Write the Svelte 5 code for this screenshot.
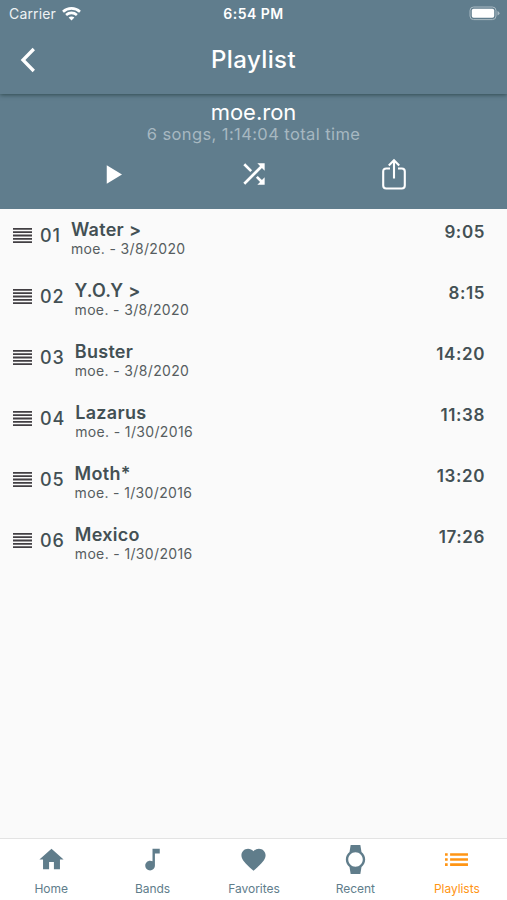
<script lang="ts">
	const songs = [
		{ title: 'Water >', date: '3/8/2020', length: '9:05' },
		{ title: 'Y.O.Y >', date: '3/8/2020', length: '8:15' },
		{ title: 'Buster', date: '3/8/2020', length: '14:20' },
		{ title: 'Lazarus', date: '1/30/2016', length: '11:38' },
		{ title: 'Moth*', date: '1/30/2016', length: '13:20' },
		{ title: 'Mexico', date: '1/30/2016', length: '17:26' }
	];

	const tabs = [
		{ name: 'Home', icon: 'M10 20v-6h4v6h5v-8h3L12 3 2 12h3v8z' },
		{
			name: 'Bands',
			icon: 'M12 3v10.55c-.59-.34-1.27-.55-2-.55-2.21 0-4 1.79-4 4s1.79 4 4 4 4-1.79 4-4V7h4V3z'
		},
		{
			name: 'Favorites',
			icon: 'M12 21.35l-1.45-1.32C5.4 15.36 2 12.28 2 8.5 2 5.42 4.42 3 7.5 3c1.74 0 3.41.81 4.5 2.09C13.09 3.81 14.76 3 16.5 3 19.58 3 22 5.42 22 8.5c0 3.78-3.4 6.86-8.55 11.54z'
		},
		{
			name: 'Recent',
			icon: 'M20 12c0-2.54-1.19-4.81-3.04-6.27L16 0H8l-.95 5.73C5.19 7.19 4 9.45 4 12s1.19 4.81 3.05 6.27L8 24h8l.96-5.73C18.81 16.81 20 14.54 20 12zM6 12c0-3.31 2.69-6 6-6s6 2.69 6 6-2.69 6-6 6-6-2.69-6-6z'
		},
		{
			name: 'Playlists',
			icon: 'M2.5 6.8h2.2v2.1H2.5zm0 4.2h2.2v2.1H2.5zm0 4.2h2.2v2.1H2.5zM6.7 6.8h14.8v2.1H6.7zm0 4.2h14.8v2.1H6.7zm0 4.2h14.8v2.1H6.7z'
		}
	];

	let active = $state('Playlists');
</script>

<div class="app">
	<header>
		<div class="status">
			<div class="carrier">
				<span>Carrier</span>
				<svg width="19" height="14" viewBox="0 0 19 14" fill="none" stroke="#fff" stroke-width="2.6">
					<path d="M1 4.7C5.8.3 13.2.3 18 4.7" />
					<path d="M4.1 8c3.1-2.8 7.7-2.8 10.800 0" />
					<path d="M9.500 13.500l-2.900-3c1.600-1.500 4.200-1.500 5.800 0z" fill="#fff" stroke="none" />
				</svg>
			</div>
			<div class="clock">6:54 PM</div>
			<div class="battery">
				<svg width="32" height="15" viewBox="0 0 32 15">
					<rect x="1" y="1" width="26" height="12.6" rx="3.6" fill="none" stroke="#a9bac3" />
					<rect x="2.8" y="2.8" width="22.4" height="9" rx="1.8" fill="#fff" />
					<path d="M28.5 5q2 .8 2 2.3t-2 2.3z" fill="#a9bac3" />
				</svg>
			</div>
		</div>
		<div class="bar">
			<button class="back" aria-label="Back">
				<svg width="16" height="26" viewBox="0 0 16 26" fill="none" stroke="#fff" stroke-width="3.3">
					<path d="M13.8 2L3 13l10.8 11" />
				</svg>
			</button>
			<h1>Playlist</h1>
		</div>
	</header>

	<section class="summary">
		<h2>moe.ron</h2>
		<p>6 songs, 1:14:04 total time</p>
		<div class="actions">
			<button aria-label="Play">
				<svg width="29" height="29" viewBox="0 0 24 24" fill="#fff"><path d="M5.6 4.3v15.4L18.2 12z" /></svg>
			</button>
			<button aria-label="Shuffle">
				<svg width="32" height="32" viewBox="0 0 24 24" fill="#fff">
					<path d="M10.59 9.17L5.41 4 4 5.41l5.17 5.17zM14.5 4l2.04 2.04L4 18.59 5.41 20 17.96 7.46 20 9.5V4zm.33 9.41l-1.41 1.41 3.13 3.13L14.5 20H20v-5.5l-2.04 2.04z" />
				</svg>
			</button>
			<button aria-label="Share">
				<svg width="26" height="32" viewBox="0 0 26 32" fill="none" stroke="#fff" stroke-width="2.1">
					<path d="M9 10.500H5.200q-3 0-3 3v14q0 3 3 3h15.600q3 0 3-3v-14q0-3-3-3H17M13 20.500V2.500M7.800 7.500L13 2.300l5.200 5.200" />
				</svg>
			</button>
		</div>
	</section>

	<ul class="songs">
		{#each songs as song, i}
			<li>
				<svg class="handle" width="19" height="15" viewBox="0 0 19 15" fill="#423f43">
					<path d="M0 0h19v1.8H0zM0 3.3h19v1.8H0zM0 6.6h19v1.8H0zM0 9.9h19v1.8H0zM0 13.2h19V15H0z" />
				</svg>
				<span class="number">{String(i + 1).padStart(2, '0')}</span>
				<div class="info">
					<div class="title">{song.title}</div>
					<div class="band">moe. - {song.date}</div>
				</div>
				<span class="length">{song.length}</span>
			</li>
		{/each}
	</ul>

	<nav>
		{#each tabs as tab}
			<button class:active={active === tab.name} onclick={() => (active = tab.name)}>
				<svg width="29" height="29" viewBox="0 0 24 24" fill="currentColor"><path d={tab.icon} /></svg>
				<span>{tab.name}</span>
			</button>
		{/each}
	</nav>
</div>

<style>
	:global(body) {
		margin: 0;
	}

	.app {
		display: flex;
		flex-direction: column;
		height: 100vh;
		overflow: hidden;
		background: #fafafa;
		color: #435054;
		font-family: Inter, sans-serif;
	}

	button {
		padding: 0;
		border: 0;
		background: none;
		font-family: inherit;
		cursor: pointer;
	}

	svg {
		display: block;
	}

	h1,
	h2,
	p,
	ul {
		margin: 0;
		padding: 0;
	}

	header {
		position: relative;
		z-index: 1;
		height: 94px;
		background: #607d8d;
		color: #fff;
		box-shadow: 0 1px 4px rgba(25, 50, 50, 0.65);
	}

	.status {
		display: grid;
		grid-template-columns: 1fr 1fr 1fr;
		align-items: center;
		height: 27px;
		padding: 0 6px 0 9px;
	}

	.carrier {
		display: flex;
		align-items: center;
		gap: 6px;
		font-size: 14px;
		letter-spacing: 0.15px;
		color: #eef2f4;
	}

	.clock {
		padding-right: 3px;
		text-align: center;
		font-size: 14px;
		font-weight: 600;
		letter-spacing: 0.5px;
	}

	.battery {
		justify-self: end;
	}

	.bar {
		display: grid;
		grid-template-columns: 1fr auto 1fr;
		align-items: center;
		height: 66px;
		padding: 0 20px;
	}

	h1 {
		font-size: 24px;
		font-weight: 500;
		line-height: 30px;
		letter-spacing: 0.4px;
	}

	.back {
		justify-self: start;
	}

	.summary {
		height: 114.5px;
		padding-top: 5px;
		box-sizing: border-box;
		background: #607d8d;
		color: #fff;
		text-align: center;
	}

	h2 {
		font-size: 22px;
		font-weight: 400;
		line-height: 26px;
	}

	p {
		font-size: 16.5px;
		line-height: 19px;
		letter-spacing: 0.4px;
		color: #a7b8c1;
	}

	.actions {
		display: grid;
		grid-template-columns: repeat(3, 140px);
		justify-content: center;
		height: 60px;
		padding-left: 1px;
	}

	.actions button {
		display: grid;
		place-items: center;
	}

	.songs {
		flex: 1;
		list-style: none;
	}

	li {
		display: flex;
		align-items: flex-start;
		height: 61.1px;
		padding: 0 22px 0 13px;
	}

	.handle {
		margin-top: 19px;
	}

	.number,
	.title,
	.length {
		font-size: 18px;
		font-weight: 600;
		line-height: 22px;
		letter-spacing: 0.3px;
	}

	.number {
		margin: 16px 10px 0 8px;
		font-weight: 500;
		letter-spacing: 0.9px;
	}

	.info {
		flex: 1;
		padding-top: 10px;
	}

	.band {
		margin-top: -1px;
		font-size: 14px;
		line-height: 17px;
		letter-spacing: 0.35px;
		color: #565d60;
	}

	.length {
		margin-top: 12px;
		font-size: 17px;
		letter-spacing: 0.6px;
	}

	nav {
		display: grid;
		grid-template-columns: repeat(5, 1fr);
		height: 62px;
		box-sizing: border-box;
		border-top: 1.5px solid #e3e3e3;
		background: #fff;
	}

	nav button {
		display: flex;
		flex-direction: column;
		align-items: center;
		padding: 6px 0 0 1px;
		color: #607d8b;
		font-size: 12px;
	}

	nav span {
		margin-top: 7px;
		line-height: 15px;
		letter-spacing: -0.05px;
	}

	nav .active {
		color: #ff9514;
	}
</style>
